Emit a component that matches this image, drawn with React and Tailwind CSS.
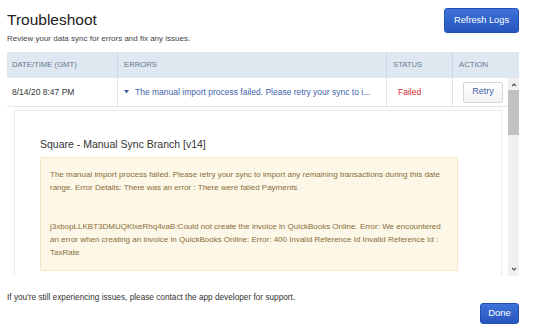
export default function App() {
  const font = { fontFamily: '"Liberation Sans", Arial, sans-serif' };
  return (
    <div className="w-[534px] h-[331px] bg-white flex flex-col overflow-hidden text-[#333]" style={font}>
      {/* Top */}
      <div className="h-[52px] flex justify-between pl-[7px] pr-[15px]">
        <div className="flex flex-col">
          <div className="mt-[10.5px] text-[15.5px] leading-[18px] text-[#222]">Troubleshoot</div>
          <div className="mt-[5.5px] text-[8px] leading-[10px] text-[#444]">Review your data sync for errors and fix any issues.</div>
        </div>
        <button className="mt-[8px] w-[75px] h-[25px] rounded-[3px] border border-[#2350b5] bg-gradient-to-b from-[#3e72d8] to-[#2656bd] text-white text-[9.25px]">
          Refresh Logs
        </button>
      </div>

      {/* Table */}
      <div className="ml-[7px] w-[512px] flex flex-col">
        <div className="h-[26px] bg-[#dfe7f1] flex text-[7.7px] text-[#667a8e] items-center">
          <div className="w-[111px] h-full flex items-center pl-[5px] border-r border-[#cfd9e5]">DATE/TIME (GMT)</div>
          <div className="w-[269px] h-full flex items-center pl-[6px] border-r border-[#cfd9e5]">ERRORS</div>
          <div className="w-[66px] h-full flex items-center pl-[6px] border-r border-[#cfd9e5]">STATUS</div>
          <div className="flex-1 h-full flex items-center pl-[6px]">ACTION</div>
        </div>
        <div className="h-[198px] flex">
          <div className="flex-1 flex flex-col overflow-hidden">
            <div className="h-[29px] flex shrink-0 items-center text-[8.5px] border-b border-[#e6e6e6]">
              <div className="w-[111px] h-full flex items-center pl-[5px] border-r border-[#e2e2e2] text-[#333]">8/14/20 8:47 PM</div>
              <div className="w-[269px] h-full flex items-center pl-[6px] border-r border-[#e2e2e2] text-[#3f5fae] whitespace-nowrap overflow-hidden">
                <svg width="5" height="4" viewBox="0 0 5 4" className="mr-[6px] shrink-0">
                  <path d="M0 0 L5 0 L2.5 3.5 Z" fill="#3f5fae" />
                </svg>
                The manual import process failed. Please retry your sync to i...
              </div>
              <div className="w-[66px] h-full flex items-center pl-[11px] border-r border-[#e2e2e2] text-[#d9262c]">Failed</div>
              <div className="flex-1 h-full flex items-center pl-[10px]">
                <button className="w-[40px] h-[21px] border border-[#d6d6d6] rounded-[2px] bg-gradient-to-b from-white to-[#f2f2f2] text-[#3f5fae] text-[9px]">Retry</button>
              </div>
            </div>
            <div className="mt-[3px] ml-[7px] w-[488px] shrink-0 border border-[#ebebeb] pl-[25px] pt-[26px] pb-[20px]">
              <div className="text-[10.5px] leading-[14px] text-[#333]">Square - Manual Sync Branch [v14]</div>
              <div className="mt-[6px] w-[418px] bg-[#fcf7e6] border border-[#f3e8c8] rounded-[2px] px-[9px] pt-[10px] pb-[11px] text-[8px] leading-[13px] text-[#8a6d3b]">
                <p>The manual import process failed. Please retry your sync to import any remaining transactions during this date range. Error Details: There was an error : There were failed Payments</p>
                <p className="mt-[26px]">j3xbopLLKBT3DMUQKlxeRhq4vaB:Could not create the invoice in QuickBooks Online. Error: We encountered an error when creating an invoice in QuickBooks Online: Error: 400 Invalid Reference Id Invalid Reference Id : TaxRate</p>
              </div>
            </div>
          </div>
          {/* scrollbar */}
          <div className="w-[11px] bg-[#f1f1f1] flex flex-col items-center">
            <svg width="6" height="10" viewBox="0 0 6 10" className="mt-[2px]">
              <path d="M1 6 L3 4 L5 6" stroke="#555" strokeWidth="1.2" fill="none" />
            </svg>
            <div className="w-[11px] h-[45px] bg-[#c1c1c1]" />
            <div className="flex-1" />
            <svg width="6" height="10" viewBox="0 0 6 10" className="mb-[2px]">
              <path d="M1 4 L3 6 L5 4" stroke="#555" strokeWidth="1.2" fill="none" />
            </svg>
          </div>
        </div>
      </div>

      {/* Footer */}
      <div className="flex-1 flex justify-between pl-[7px] pr-[15px]">
        <div className="mt-[17px] text-[8.25px] leading-[10px] text-[#333]">If you're still experiencing issues, please contact the app developer for support.</div>
        <button className="mt-[27px] w-[39px] h-[21px] rounded-[3px] border border-[#2350b5] bg-gradient-to-b from-[#3e72d8] to-[#2656bd] text-white text-[9.5px]">
          Done
        </button>
      </div>
    </div>
  );
}
